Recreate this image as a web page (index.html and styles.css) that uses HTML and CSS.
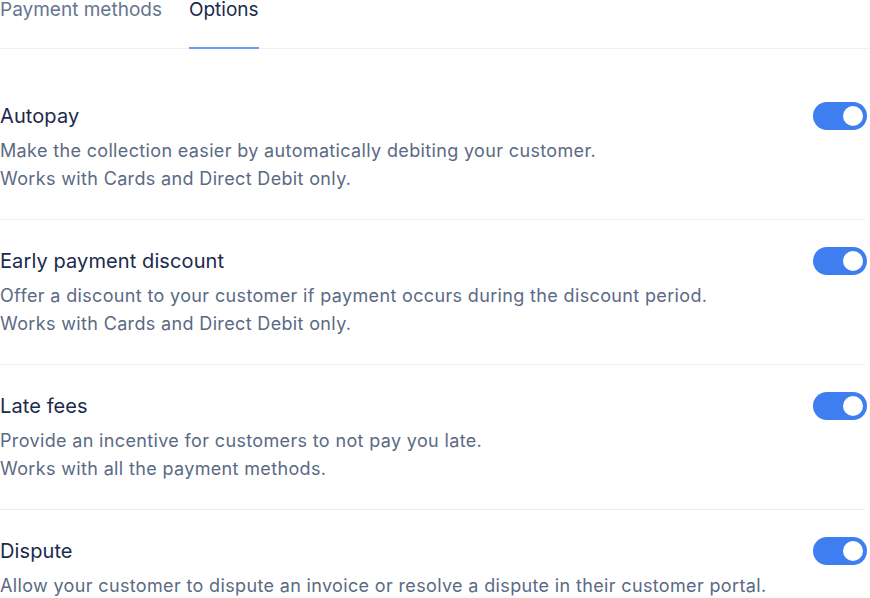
FILE: index.html
```html
<!DOCTYPE html>
<html>
<head>
<meta charset="utf-8">
<link rel="stylesheet" href="styles.css">
</head>
<body>
<div class="page">
  <nav class="tabs">
    <div class="tab">Payment methods</div>
    <div class="tab active">Options</div>
  </nav>
  <div class="list">
    <div class="row">
      <div class="text">
        <div class="title">Autopay</div>
        <div class="desc">Make the collection easier by automatically debiting your customer.<br>Works with Cards and Direct Debit only.</div>
      </div>
      <div class="toggle"><span class="knob"></span></div>
    </div>
    <div class="row">
      <div class="text">
        <div class="title">Early payment discount</div>
        <div class="desc">Offer a discount to your customer if payment occurs during the discount period.<br>Works with Cards and Direct Debit only.</div>
      </div>
      <div class="toggle"><span class="knob"></span></div>
    </div>
    <div class="row">
      <div class="text">
        <div class="title">Late fees</div>
        <div class="desc">Provide an incentive for customers to not pay you late.<br>Works with all the payment methods.</div>
      </div>
      <div class="toggle"><span class="knob"></span></div>
    </div>
    <div class="row">
      <div class="text">
        <div class="title">Dispute</div>
        <div class="desc">Allow your customer to dispute an invoice or resolve a dispute in their customer portal.</div>
      </div>
      <div class="toggle"><span class="knob"></span></div>
    </div>
  </div>
</div>
</body>
</html>
```
FILE: styles.css
```css
* { box-sizing: border-box; }
html, body { margin: 0; padding: 0; background: #fff; }
body {
  font-family: Inter, "Noto Sans", sans-serif;
  overflow: hidden;
}
.page { width: 870px; }
.tabs {
  display: flex;
  gap: 27px;
  border-bottom: 1px solid #eef0f2;
  height: 49px;
}
.tab {
  font-size: 19px;
  line-height: 19px;
  color: #66758f;
  padding-bottom: 28px;
  border-bottom: 2px solid transparent;
  height: 49px;
}
.tab.active {
  color: #1a2a4d;
  border-bottom-color: #6a9ff0;
}
.list { padding-top: 26px; margin-right: 5px; }
.row {
  display: flex;
  justify-content: space-between;
  align-items: flex-start;
  padding: 29px 0 26px;
  border-bottom: 1px solid #ebedf0;
}
.title {
  font-size: 20px;
  line-height: 24px;
  letter-spacing: 0.1px;
  color: #1a2a4d;
}
.desc {
  margin-top: 9px;
  font-size: 18px;
  line-height: 28px;
  letter-spacing: 0.35px;
  color: #5b6a84;
}
.toggle {
  width: 54px;
  height: 28px;
  border-radius: 14px;
  background: #3f7ef0;
  margin-top: -2px;
  margin-right: -2px;
  display: flex;
  align-items: center;
  justify-content: flex-end;
  padding-right: 4px;
  flex-shrink: 0;
}
.knob {
  width: 20px;
  height: 20px;
  border-radius: 50%;
  background: #fff;
}
```
